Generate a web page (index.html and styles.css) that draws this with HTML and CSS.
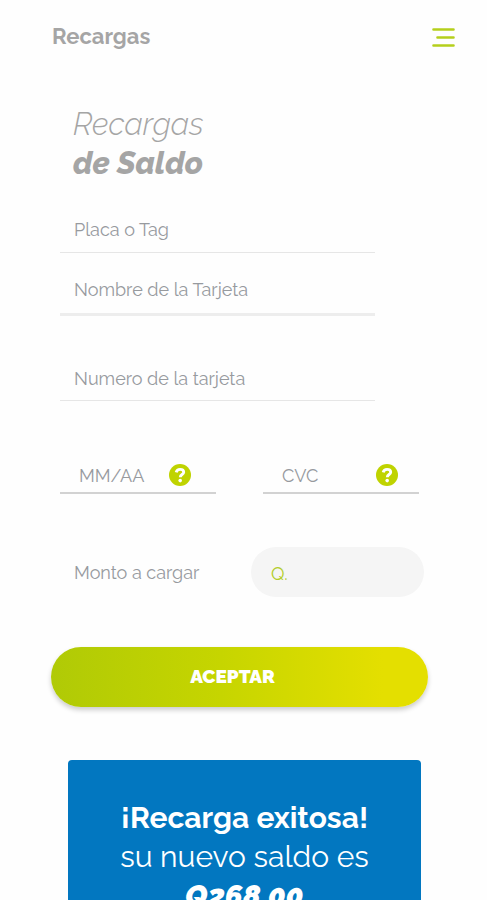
FILE: index.html
```html
<!DOCTYPE html>
<html lang="es">
<head>
<meta charset="utf-8">
<meta name="viewport" content="width=device-width, initial-scale=1">
<title>Recargas</title>
<link rel="stylesheet" href="styles.css">
</head>
<body>
<div class="screen">
  <header class="topbar">
    <span class="topbar-title">Recargas</span>
    <button class="menu" type="button" aria-label="Menú">
      <svg width="24" height="20" viewBox="0 0 24 20" aria-hidden="true">
        <path d="M2.5 2.5H22.5M6.5 10.5H22.5M2.5 18.5H22.5" fill="none" stroke="#b5cf1c" stroke-width="2.6" stroke-linecap="round"/>
      </svg>
    </button>
  </header>
  <main class="content">
    <h1 class="title">Recargas <strong>de Saldo</strong></h1>
    <form class="form">
      <input class="field" type="text" aria-label="Placa o Tag" placeholder="Placa o Tag">
      <input class="field field-strong" type="text" aria-label="Nombre de la Tarjeta" placeholder="Nombre de la Tarjeta">
      <input class="field field-number" type="text" aria-label="Numero de la tarjeta" placeholder="Numero de la tarjeta">
      <div class="pair">
        <div class="short-field">
          <input class="short-input" type="text" aria-label="MM/AA" placeholder="MM/AA">
          <button class="help help-date" type="button" aria-label="Ayuda MM/AA">
            <svg width="22" height="22" viewBox="0 0 22 22" aria-hidden="true">
              <circle cx="11" cy="11" r="11" fill="#bfd300"/>
              <path d="M7.2 8.3C7.7 6.3 9.1 5.4 11.1 5.4C13.2 5.4 14.7 6.5 14.7 8.2C14.7 10.7 11.3 10.4 11.3 13.2" fill="none" stroke="#fff" stroke-width="2.9"/>
              <circle cx="11.2" cy="16.6" r="1.8" fill="#fff"/>
            </svg>
          </button>
        </div>
        <div class="short-field">
          <input class="short-input" type="text" aria-label="CVC" placeholder="CVC">
          <button class="help" type="button" aria-label="Ayuda CVC">
            <svg width="22" height="22" viewBox="0 0 22 22" aria-hidden="true">
              <circle cx="11" cy="11" r="11" fill="#bfd300"/>
              <path d="M7.2 8.3C7.7 6.3 9.1 5.4 11.1 5.4C13.2 5.4 14.7 6.5 14.7 8.2C14.7 10.7 11.3 10.4 11.3 13.2" fill="none" stroke="#fff" stroke-width="2.9"/>
              <circle cx="11.2" cy="16.6" r="1.8" fill="#fff"/>
            </svg>
          </button>
        </div>
      </div>
      <div class="amount">
        <label class="amount-label" for="monto">Monto a cargar</label>
        <input class="amount-input" id="monto" type="text" placeholder="Q.">
      </div>
      <button class="submit" type="button">ACEPTAR</button>
    </form>
    <section class="result">
      <strong>¡Recarga exitosa!</strong>
      <span>su nuevo saldo es</span>
      <em>Q268.00</em>
    </section>
  </main>
</div>
</body>
</html>
```
FILE: styles.css
```css
* {
  box-sizing: border-box;
}

body {
  margin: 0;
  background: #fefefe;
  color: #979a9e;
  font-family: Raleway, Lato, sans-serif;
  font-size: 18px;
}

button,
input {
  font: inherit;
  border: 0;
  padding: 0;
  background: none;
}

input {
  min-width: 0;
  border-radius: 0;
  outline: 0;
  color: #85888c;
}

input::placeholder {
  color: #979a9e;
  opacity: 1;
}

svg {
  display: block;
}

.screen {
  height: 100vh;
  overflow: hidden;
}

.topbar {
  display: flex;
  align-items: center;
  justify-content: space-between;
  height: 74px;
  padding: 0 32px 0 52px;
}

.topbar-title {
  padding-bottom: 2px;
  color: #a5a5a5;
  font-size: 22px;
  font-weight: 700;
}

.content {
  padding: 31px 59px 0 51px;
}

.title {
  margin: 0 22px 23px;
  color: #a5a5a5;
  font-size: 31px;
  font-style: italic;
  font-weight: 300;
  line-height: 39px;
}

.title strong {
  display: block;
  font-weight: 800;
}

.form {
  display: flex;
  flex-direction: column;
}

.field {
  height: 47px;
  margin: 0 53px 12px 9px;
  padding: 0 14px;
  border-bottom: 1px solid #e6e6e6;
}

.field-strong {
  height: 51px;
  margin-bottom: 38px;
  border-bottom: 3px solid #ededed;
}

.field-number {
  margin-bottom: 57px;
  padding-top: 2px;
}

.pair {
  display: grid;
  grid-template-columns: repeat(2, minmax(0, 1fr));
  gap: 47px;
  margin: 0 9px 53px;
}

.short-field {
  display: flex;
  align-items: center;
  height: 36px;
  padding: 0 21px 0 19px;
  border-bottom: 2px solid #d2d2d2;
}

.short-input {
  flex: 1;
  height: 34px;
}

.help-date {
  margin-right: 4px;
}

.amount {
  display: flex;
  align-items: center;
  justify-content: space-between;
  margin: 0 4px 50px 23px;
}

.amount-input {
  width: 173px;
  height: 50px;
  padding: 2px 20px 0;
  border-radius: 25px;
  background: #f5f5f5;
}

.amount-input::placeholder {
  color: #b3cd2c;
}

.submit {
  height: 60px;
  padding: 0 14px 2px 0;
  border-radius: 30px;
  background: linear-gradient(90deg, #b0ca06, #c6d500 45%, #e4df00 88%);
  box-shadow: 0 3px 5px rgba(0, 0, 0, 0.2);
  color: #fff;
  font-size: 19px;
  font-weight: 900;
}

.result {
  display: flex;
  flex-direction: column;
  margin: 53px 7px 0 17px;
  padding: 38px 20px;
  border-radius: 4px;
  background: #0277c0;
  color: #fff;
  font-size: 30px;
  line-height: 39px;
  text-align: center;
}

.result strong {
  font-weight: 700;
}

.result em {
  font-weight: 900;
  font-variant-numeric: oldstyle-nums;
}
```
